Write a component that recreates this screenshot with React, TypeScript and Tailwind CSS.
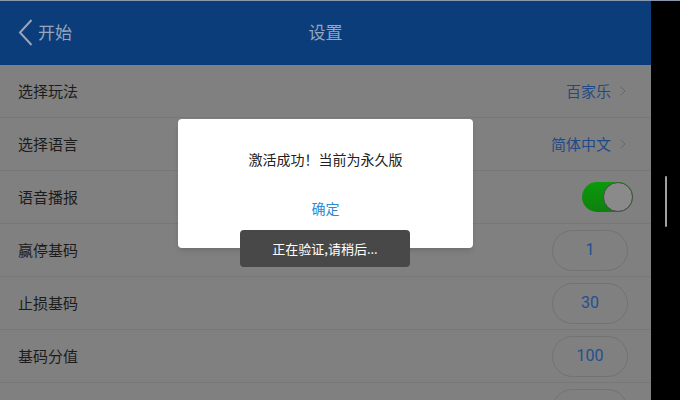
import { ChevronRight } from "lucide-react";

const font = { fontFamily: '"Noto Sans CJK SC", "Noto Sans", sans-serif' };

const rows = [
  { label: "选择玩法", kind: "link", value: "百家乐" },
  { label: "选择语言", kind: "link", value: "简体中文" },
  { label: "语音播报", kind: "toggle" },
  { label: "赢停基码", kind: "pill", value: "1" },
  { label: "止损基码", kind: "pill", value: "30" },
  { label: "基码分值", kind: "pill", value: "100" },
  // next row is only peeking in at the bottom edge
  { label: "", kind: "pill", value: "" },
];

const Row = ({ r }: { r: (typeof rows)[number] }) => (
  <div className="h-[53px] shrink-0 flex items-center justify-between pl-[18px] border-b border-[#777777]">
    <span className="text-[15px] text-[#1c1c1c]">{r.label}</span>
    {r.kind === "link" && (
      <div className="flex items-center gap-[4px] pr-[20px]">
        <span className="text-[15px] text-[#1f4a85]">{r.value}</span>
        <ChevronRight size={16} strokeWidth={1.5} className="text-[#666666]" />
      </div>
    )}
    {r.kind === "toggle" && (
      <div className="mr-[18px] w-[51px] h-[30px] rounded-full bg-gradient-to-b from-[#0a9a0a] to-[#0e800e] flex justify-end">
        <div className="w-[30px] h-[30px] rounded-full bg-[#8a8a8a] border border-[#4a4a4a]" />
      </div>
    )}
    {r.kind === "pill" && (
      <div
        className="mr-[23px] w-[76px] h-[41px] rounded-full border border-[#727272] flex items-center justify-center text-[16px] text-[#22508f]"
        style={{ fontFamily: "Roboto, sans-serif" }}
      >
        {r.value}
      </div>
    )}
  </div>
);

export default function App() {
  return (
    <div className="relative w-[680px] h-[400px] overflow-hidden flex bg-black" style={font}>
      <div className="w-[651px] h-full flex flex-col bg-[#808080]">
        <div className="h-[65px] shrink-0 bg-[#0b3d7b] border-t border-[#8a96ae] flex items-center relative">
          <div className="flex items-center pl-[18px] -mt-[2px] text-[#98a5bb]">
            <svg width="15" height="27" viewBox="0 0 15 27" fill="none">
              <path d="M13.5 1 L2 13.5 L13.5 26" stroke="currentColor" strokeWidth="2" />
            </svg>
            <span className="text-[17px] ml-[5px]">开始</span>
          </div>
          <span className="absolute left-1/2 -translate-x-1/2 -mt-[2px] text-[17px] text-[#98a5bb]">设置</span>
        </div>
        {rows.map((r, i) => (
          <Row key={i} r={r} />
        ))}
      </div>
      <div className="flex-1 relative border-t border-[#8a96ae]">
        <div className="absolute left-[14px] top-[175px] w-[2px] h-[51px] rounded bg-[#a0a0a0]" />
      </div>

      <div className="absolute left-[178px] top-[119px] w-[295px] h-[129px] bg-white rounded-[4px] shadow-md flex flex-col items-center">
        <div className="mt-[30px] text-[14px] text-[#222222]">激活成功！当前为永久版</div>
        <div className="mt-[28px] text-[14px] text-[#2c8ad6]">确定</div>
      </div>

      <div className="absolute left-[240px] top-[230px] w-[170px] h-[37px] rounded-[4px] bg-[#484848] flex items-center justify-center text-[13px] text-white">
        正在验证,请稍后...
      </div>
    </div>
  );
}
